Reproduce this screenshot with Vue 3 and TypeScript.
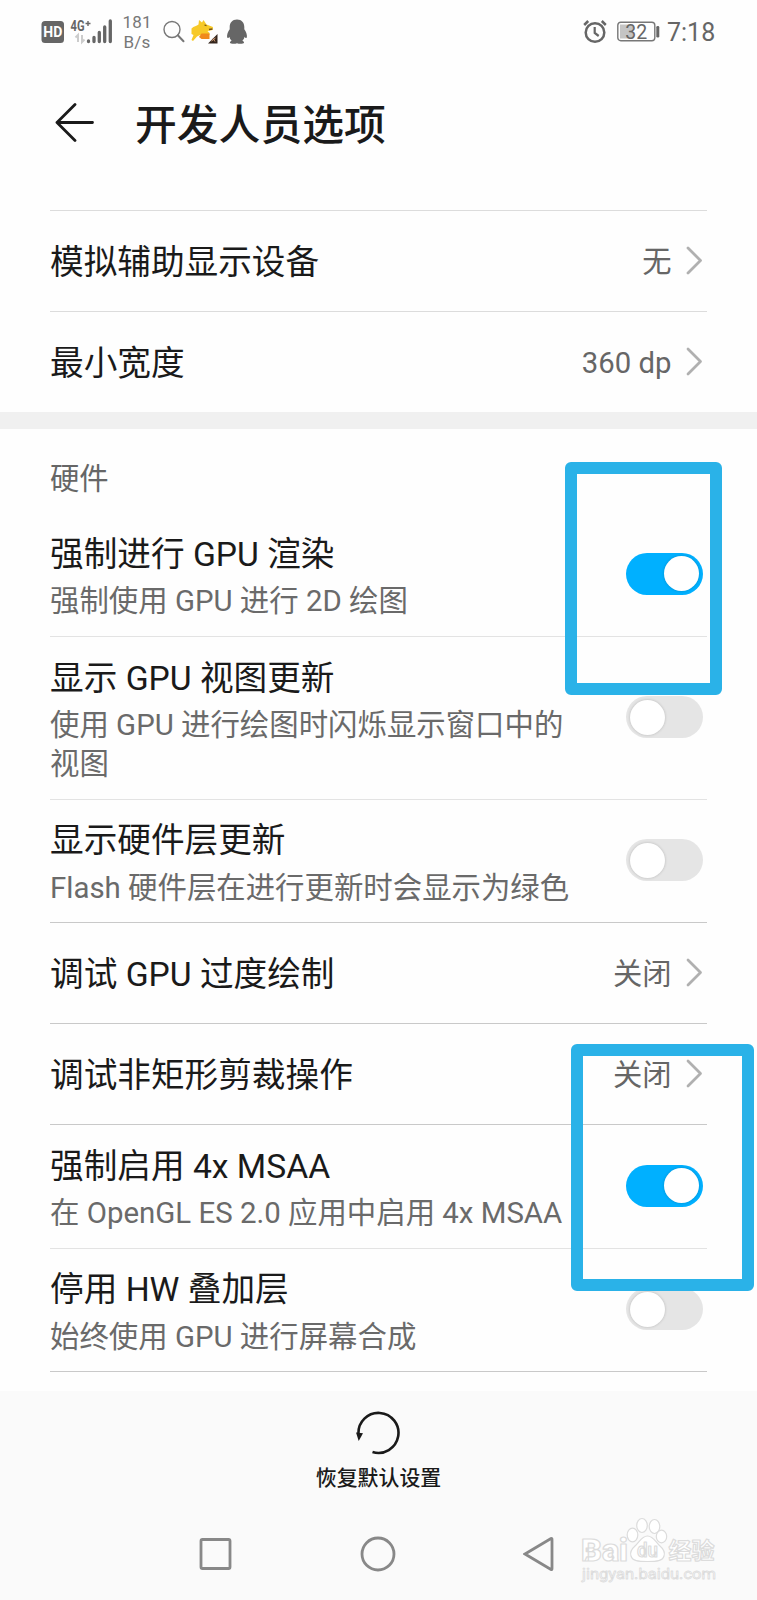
<script setup lang="ts">
interface Row {
  title: string
  lines?: string
  value?: string
  on?: boolean
  height: number
  tone: string
}

const topRows: Row[] = [
  { title: '模拟辅助显示设备', value: '无', height: 101, tone: 'mid' },
  { title: '最小宽度', value: '360 dp', height: 100, tone: 'none' },
]

const hardwareRows: Row[] = [
  { title: '强制进行 GPU 渲染', lines: '强制使用 GPU 进行 2D 绘图', on: true, height: 124, tone: 'light' },
  { title: '显示 GPU 视图更新', lines: '使用 GPU 进行绘图时闪烁显示窗口中的视图', on: false, height: 163, tone: 'light' },
  { title: '显示硬件层更新', lines: 'Flash 硬件层在进行更新时会显示为绿色', on: false, height: 123, tone: 'dark' },
  { title: '调试 GPU 过度绘制', value: '关闭', height: 101, tone: 'dark' },
  { title: '调试非矩形剪裁操作', value: '关闭', height: 101, tone: 'dark' },
  { title: '强制启用 4x MSAA', lines: '在 OpenGL ES 2.0 应用中启用 4x MSAA', on: true, height: 124, tone: 'light' },
  { title: '停用 HW 叠加层', lines: '始终使用 GPU 进行屏幕合成', on: false, height: 123, tone: 'dark' },
]
</script>

<template>
  <div class="screen">
    <header class="status">
      <svg class="hd" width="24" height="24" viewBox="0 0 24 24">
        <rect x="0.5" y="1" width="22.5" height="22" rx="3.5" fill="#666" />
        <text x="11.8" y="17.2" text-anchor="middle" textLength="19" lengthAdjust="spacingAndGlyphs" class="hd-text">HD</text>
      </svg>
      <svg class="signal" width="44" height="26" viewBox="0 0 44 26">
        <text x="0.5" y="11.5" textLength="14" lengthAdjust="spacingAndGlyphs" class="net-text">4G</text>
        <path d="M15.5 4.500h5M18 2v5" stroke="#666" stroke-width="1.400" />
        <path d="M8 23V16l-2.500 2.500M12 16v7l2.500-2.500" fill="none" stroke="#ccc" stroke-width="2" />
        <g stroke="#666" stroke-width="3.300" stroke-linecap="round">
          <path d="M18.500 22v0.500M24 18.500v4M29.300 13.500v9M34.700 8v14.500M40.300 2v20.500" />
        </g>
      </svg>
      <div class="speed"><span>181</span><span>B/s</span></div>
      <svg class="search" width="22" height="24" viewBox="0 0 22 24">
        <circle cx="9" cy="9.500" r="8" fill="none" stroke="#777" stroke-width="1.400" />
        <path d="M14.800 15.300l5.700 6" stroke="#777" stroke-width="2" stroke-linecap="round" />
      </svg>
      <svg class="fox" width="28" height="26" viewBox="0 0 28 26">
        <path d="M.5 9.500C3 7 5.500 7.500 7.500 5.500L8 1l3 2.500L12.500 1l3 4.500 6.500 2.500-.5 3-5 1 2 2v2H9L6 17.500 2 22l-1.500-1 2-5-2-1z" fill="#f7c928" />
        <path d="M10.500 14.500h8V20h-8l-2.500-2z" fill="#f08a1d" />
        <path d="M13.500 6l2 .6M18 10.500l3.500-.5" stroke="#765315" stroke-width="1.300" />
        <path d="M26.500 15v9.500H17z" fill="#34251c" />
        <path d="M20.500 22l4-3M22 19.500l2 3" stroke="#dba27a" stroke-width="1" />
      </svg>
      <svg class="penguin" width="22" height="26" viewBox="0 0 22 26">
        <path d="M11 .5c4.700 0 7.300 3.300 7.300 7.500v2.200c1.600 2.300 3 5.300 2.600 7.900-.3 1.700-1.500.9-2.300-.3-.4 1.600-1.100 2.800-2.200 3.900 1.300.5 1.800 1.200 1.600 2-.4 1.400-5.100 1.400-7 .6-1.900.8-6.600.8-7-.6-.2-.8.3-1.500 1.600-2-1.100-1.100-1.800-2.300-2.200-3.900-.8 1.200-2 2-2.300.3-.4-2.600 1-5.600 2.600-7.900V8C3.700 3.800 6.300.5 11 .5z" fill="#666" />
      </svg>
      <span class="spacer"></span>
      <svg class="alarm" width="24" height="26" viewBox="0 0 24 26">
        <g fill="none" stroke="#666">
          <circle cx="12" cy="13.500" r="9.300" stroke-width="2.500" />
          <path d="M11.700 8v6l4 3" stroke-width="2.200" />
          <path d="M1.200 6l4-4M22.800 6l-4-4" stroke-width="2.500" />
        </g>
      </svg>
      <svg class="battery" width="44" height="22" viewBox="0 0 44 22">
        <rect x="0.800" y="1.200" width="37" height="18.500" rx="3" fill="none" stroke="#777" stroke-width="1.400" />
        <rect x="3" y="3.500" width="13" height="14" fill="#c4c4c4" />
        <rect x="39.300" y="5" width="3" height="11.500" rx="1.300" fill="#666" />
        <text x="19.300" y="17.500" text-anchor="middle" class="battery-text">32</text>
      </svg>
      <span class="clock">7:18</span>
    </header>

    <div class="titlebar">
      <svg width="40" height="40" viewBox="0 0 40 40" fill="none" stroke="#1a1a1a" stroke-width="2.800" stroke-linecap="round" stroke-linejoin="round">
        <path d="M38.500 20.500H3M21 2.500L3 20.500l18 18" />
      </svg>
      <h1>开发人员选项</h1>
    </div>

    <section class="list first">
      <div v-for="row in topRows" :key="row.title" class="row" :class="row.tone" :style="{ height: row.height + 'px' }">
        <div class="texts narrow"><span class="title">{{ row.title }}</span></div>
        <span class="value">{{ row.value }}</span>
        <svg class="chevron" width="17" height="29" viewBox="0 0 17 29"><path d="M2 2l12.500 12.500L2 27" /></svg>
      </div>
    </section>

    <div class="band"></div>

    <h2>硬件</h2>
    <section class="list">
      <div v-for="row in hardwareRows" :key="row.title" class="row" :class="row.tone" :style="{ height: row.height + 'px' }">
        <div class="texts" :class="{ narrow: row.value }">
          <span class="title">{{ row.title }}</span>
          <span v-if="row.lines" class="summary">{{ row.lines }}</span>
        </div>
        <template v-if="row.value">
          <span class="value">{{ row.value }}</span>
          <svg class="chevron" width="17" height="29" viewBox="0 0 17 29"><path d="M2 2l12.500 12.500L2 27" /></svg>
        </template>
        <span v-else class="switch" :class="{ on: row.on }"><i></i></span>
      </div>
    </section>

    <footer>
      <svg class="reset" width="46" height="46" viewBox="0 0 46 46">
        <path d="M3.500 24A20 20 0 1 1 17.500 42" fill="none" stroke="#1a1a1a" stroke-width="2.600" />
        <path d="M1 22.500l7 .8L3.700 31z" fill="#1a1a1a" />
      </svg>
      <span class="reset-label">恢复默认设置</span>
      <nav>
        <svg width="34" height="36" viewBox="0 0 34 36"><rect x="2" y="3.500" width="29" height="29" rx="1.500" /></svg>
        <svg width="36" height="36" viewBox="0 0 36 36"><circle cx="18" cy="18" r="16" /></svg>
        <svg width="32" height="36" viewBox="0 0 32 36"><path d="M2 18L28 2.500Q29 2 29 3.500V32.500Q29 34 28 33.500z" /></svg>
      </nav>
    </footer>

    <div class="mark upper"></div>
    <div class="mark lower"></div>

    <svg class="watermark" width="150" height="74" viewBox="0 0 150 74">
      <g fill="#fff" stroke="#dcdcdc" stroke-width="1.200" stroke-linejoin="round">
        <ellipse cx="52.500" cy="19" rx="5.300" ry="6.800" />
        <ellipse cx="62" cy="9.500" rx="5.300" ry="7" />
        <ellipse cx="74.500" cy="10.500" rx="5.300" ry="7" />
        <ellipse cx="81.500" cy="20.500" rx="5.200" ry="6.300" />
        <path d="M67.500 20c6 0 8 6 12.500 10 4 3.500 5 7 4 10-1.500 5-7 5.500-16.500 5.500S52.500 45 51 40c-1-3 0-6.500 4-10 4.500-4 6.500-10 12.500-10z" />
        <text x="1" y="44.500" textLength="47" lengthAdjust="spacingAndGlyphs" class="wm-bai">Bai</text>
        <text x="57" y="41" textLength="21" lengthAdjust="spacingAndGlyphs" class="wm-du">du</text>
        <text x="88.500" y="42.500" textLength="46" lengthAdjust="spacingAndGlyphs" class="wm-cn">经验</text>
        <text x="2" y="62.500" textLength="134" lengthAdjust="spacingAndGlyphs" class="wm-url">jingyan.baidu.com</text>
      </g>
    </svg>
  </div>
</template>

<style>
body {
  margin: 0;
  background: #fdfdfd;
}
</style>

<style scoped>
.screen {
  position: relative;
  width: 757px;
  height: 1600px;
  overflow: hidden;
  background: #fefefe;
  color: #1a1a1a;
  font-family: Roboto, "Noto Sans CJK SC", sans-serif;
  display: flex;
  flex-direction: column;
}
.status {
  height: 64px;
  flex: none;
  display: flex;
  align-items: center;
  padding: 0 42px 0 41px;
  box-sizing: border-box;
  color: #666;
}
.hd-text {
  font-size: 14px;
  font-weight: 700;
  fill: #fff;
}
.net-text {
  font-size: 14px;
  font-weight: 700;
  fill: #666;
}
.signal {
  margin-left: 5px;
}
.speed {
  width: 28px;
  margin-left: 9px;
  padding-top: 1px;
  display: flex;
  flex-direction: column;
  align-items: center;
  font-size: 17px;
  line-height: 19.500px;
  letter-spacing: 0.2px;
  color: #777;
}
.search {
  margin-left: 12px;
}
.fox {
  margin-left: 6px;
}
.penguin {
  margin-left: 7px;
}
.spacer {
  flex: 1;
}
.battery {
  margin-left: 10px;
}
.battery-text {
  font-size: 19.500px;
  fill: #666;
}
.clock {
  width: 48px;
  margin-left: 6px;
  padding-top: 1px;
  font-size: 25px;
  white-space: nowrap;
}
.titlebar {
  height: 146px;
  flex: none;
  display: flex;
  align-items: flex-start;
  padding: 38px 0 0 54px;
  box-sizing: border-box;
}
h1 {
  margin: -6px 0 0 41px;
  font-size: 41.800px;
  line-height: 60px;
  font-weight: 500;
}
.list {
  flex: none;
  margin: 0 50px;
}
.first {
  border-top: 1px solid #dcdcdc;
}
.row {
  display: flex;
  align-items: center;
  box-sizing: border-box;
  border-bottom: 1px solid #dcdcdc;
}
.row.none {
  border-bottom: 0;
}
.row.light {
  border-color: #e3e3e3;
}
.row.dark {
  border-color: #c9c9c9;
}
.texts {
  display: flex;
  flex-direction: column;
  gap: 3.500px;
  width: 525px;
  flex: none;
  padding-top: 3px;
}
.texts.narrow {
  width: 440px;
}
.title {
  font-size: 33.650px;
  line-height: 48px;
  white-space: nowrap;
}
.summary {
  font-size: 29.420px;
  line-height: 39px;
  color: #6a6a6a;
  margin-right: -6px;
}
.value {
  margin-left: auto;
  padding-top: 2px;
  font-size: 29.300px;
  line-height: 40px;
  color: #666;
  white-space: nowrap;
}
.chevron {
  flex: none;
  margin: 0 4.500px 2px 14px;
  fill: none;
  stroke: #b0b0b0;
  stroke-width: 2.800px;
  stroke-linecap: round;
  stroke-linejoin: round;
}
.switch {
  flex: none;
  margin: 0 4px 2px auto;
  width: 77px;
  height: 42px;
  border-radius: 21px;
  background: #e5e5e5;
  display: flex;
  align-items: center;
  box-sizing: border-box;
  padding: 0 4px;
}
.switch i {
  width: 35px;
  height: 35px;
  border-radius: 50%;
  background: #fff;
  box-shadow: 0 0 3px rgba(0, 0, 0, 0.2);
}
.switch.on {
  background: #00b0ff;
  justify-content: flex-end;
}
.band {
  height: 17px;
  flex: none;
  background: #f0f0f0;
}
h2 {
  margin: 0;
  height: 84px;
  flex: none;
  box-sizing: border-box;
  padding: 30px 0 0 50px;
  font-size: 29.300px;
  line-height: 40px;
  font-weight: 400;
  color: #666;
}
footer {
  margin-top: auto;
  height: 209px;
  flex: none;
  background: #fafafa;
  display: flex;
  flex-direction: column;
  align-items: center;
}
.reset {
  margin: 19px 2px 0 0;
}
.reset-label {
  margin-top: 7px;
  font-size: 20.900px;
  line-height: 30px;
  font-weight: 500;
}
nav {
  width: 356px;
  margin: 43px 3px 0 0;
  display: flex;
  align-items: center;
  justify-content: space-between;
}
nav svg {
  fill: none;
  stroke: #888;
  stroke-width: 2.800px;
}
.mark {
  position: absolute;
  box-sizing: border-box;
  border: 12.500px solid #2ab2e8;
  border-radius: 6px;
}
.upper {
  left: 565px;
  top: 462px;
  width: 157px;
  height: 233px;
}
.lower {
  left: 571px;
  top: 1044px;
  width: 183px;
  height: 247px;
}
.watermark {
  position: absolute;
  left: 580px;
  top: 1516px;
  font-family: Roboto, "Noto Sans CJK SC", sans-serif;
}
.wm-bai {
  font-size: 31px;
  font-weight: 900;
}
.wm-du {
  font-size: 20px;
  font-weight: 500;
}
.wm-cn {
  font-size: 23px;
  font-weight: 700;
}
.wm-url {
  font-size: 15.500px;
  stroke-width: 0.800px;
}
</style>
